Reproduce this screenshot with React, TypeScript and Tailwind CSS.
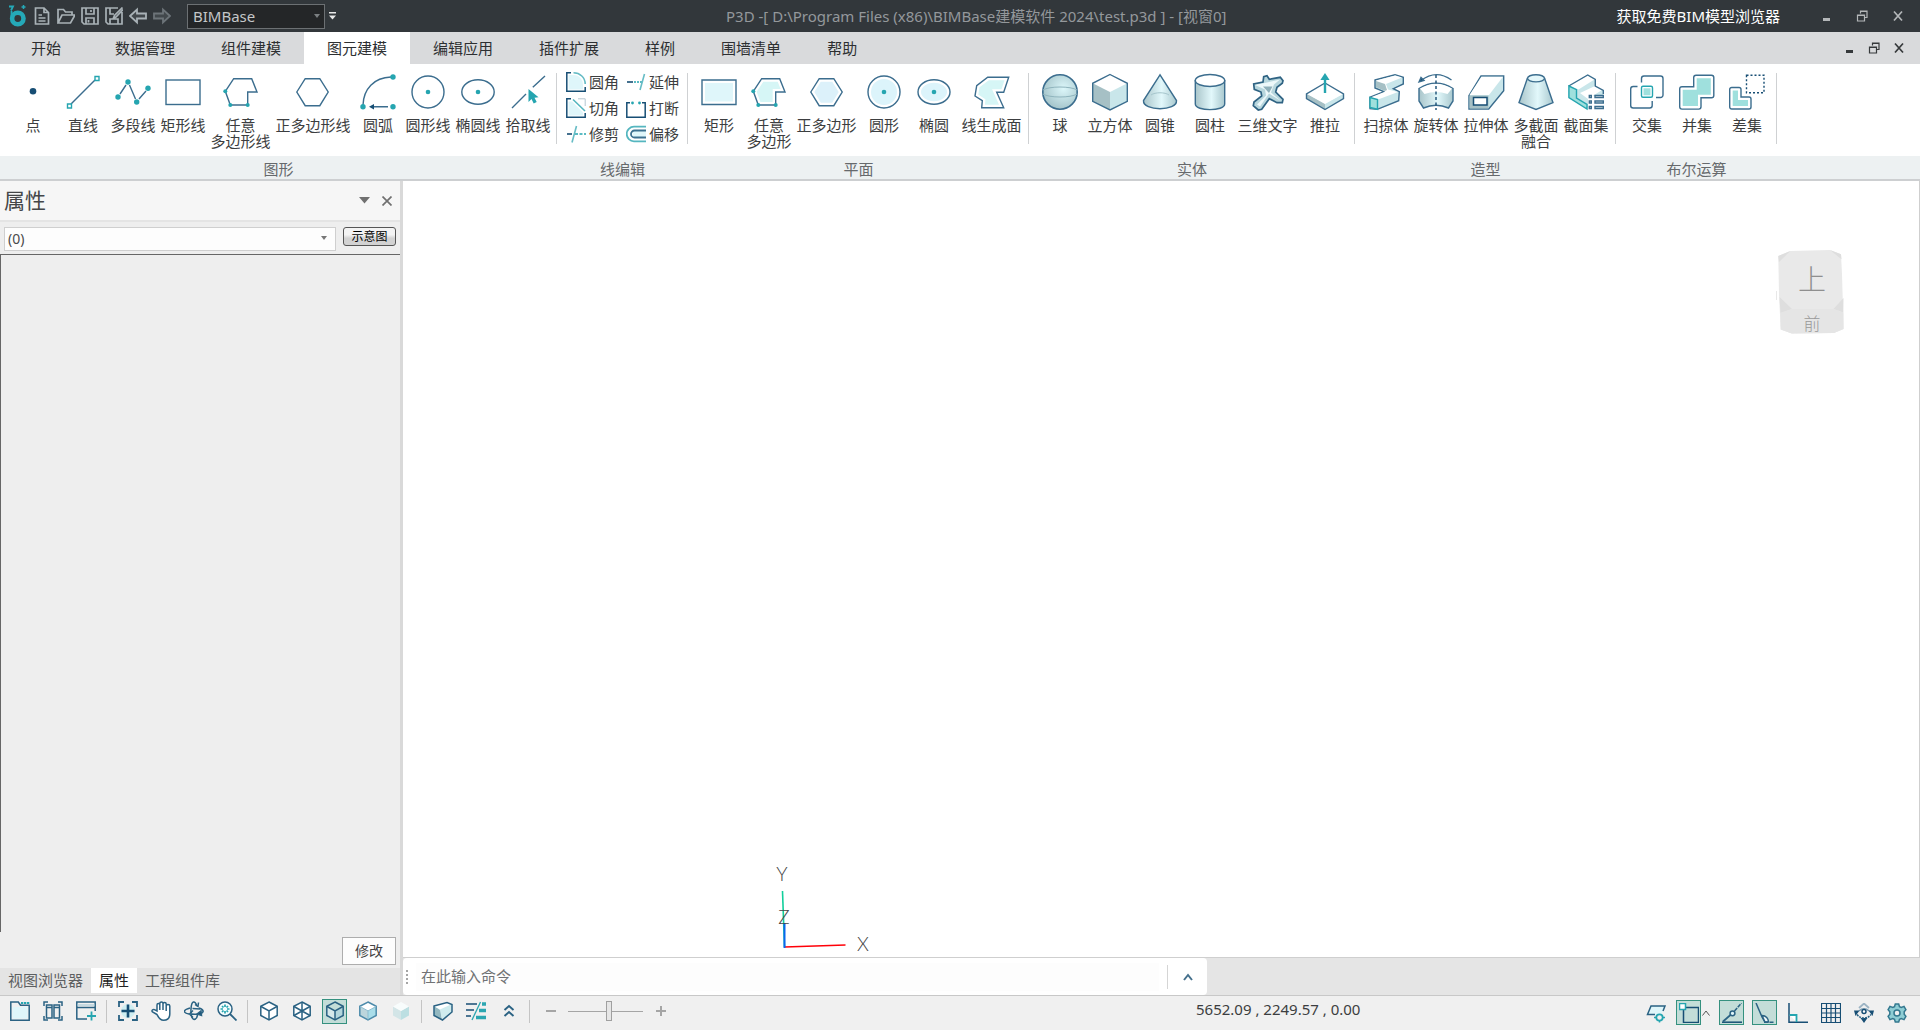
import { useState } from 'react';
import type { ReactNode } from 'react';

const NAVY = '#174e74';
const LINE = '#3b6d8e';
const TEAL = '#25a5b0';
const PALE = '#dff6fa';
const MINT = '#9fe0dd';

const menuTabs = ['开始', '数据管理', '组件建模', '图元建模', '编辑应用', '插件扩展', '样例', '围墙清单', '帮助'];

const FREE_POLY = 'M2.3 17.3 10.7 4.7h18L34 18h-9.3v13H7.3Z';
const HEXAGON = 'M1.8 18 10.2 4.7h14.6L33.2 18l-8.4 13.7H10.2Z';
const FACE = 'M13.7 3.3h21l-5 15h-7l7 15.4h-22l.6-7L1 22l1.7-10.3Z';

const Face = ({ d, fill = PALE }: { d: string; fill?: string }) => (
  <>
    <path d={d} fill={fill} stroke="#fff" strokeWidth="6" />
    <path d={d} />
  </>
);

const Dot = ({ x, y, r = 2.3, fill = TEAL }: { x: number; y: number; r?: number; fill?: string }) => (
  <circle cx={x} cy={y} r={r} fill={fill} stroke="none" />
);

const PolyDots = () => (
  <>
    <Dot x={2.3} y={17.3} r={2} />
    <Dot x={7.3} y={31} r={2} />
    <Dot x={24.7} y={31} r={2} />
  </>
);

const bigIcons: Record<string, ReactNode> = {
  point: <Dot x={18} y={17.3} r={3.3} fill={NAVY} />,
  line: (
    <>
      <path d="M6 30 30 6" />
      <path d="M2.5 30h4v4h-4zM30 2.5h4v4h-4z" fill="#fff" stroke={TEAL} />
    </>
  ),
  polyline: (
    <>
      <path d="M5 20 11 11M14.500 11l6 14M24 25l7-8" />
      <Dot x={3} y={23} r={2.7} />
      <Dot x={13} y={8} r={2.7} />
      <Dot x={21.7} y={28} r={2.7} />
      <Dot x={33} y={14.3} r={2.7} />
    </>
  ),
  rectLine: <rect x="1" y="6" width="34" height="24.5" />,
  polyLine: (
    <>
      <path d={FREE_POLY} />
      <PolyDots />
    </>
  ),
  hexLine: <path d={HEXAGON} />,
  arc: (
    <>
      <path d="M3 31C3.500 15 14 3.500 31 3M12 32.700h16" />
      <path d="m9 32.700 5-2.700v5.400z" fill={NAVY} stroke="none" />
      <Dot x={3} y={32.7} r={2.7} />
      <Dot x={33} y={3} r={2.7} />
      <Dot x={33} y={32.7} r={2.7} />
    </>
  ),
  circleLine: (
    <>
      <circle cx="18" cy="18" r="16" />
      <Dot x={18} y={18} />
    </>
  ),
  ellipseLine: (
    <>
      <ellipse cx="18" cy="18" rx="16.200" ry="12.200" />
      <Dot x={18} y={18} />
    </>
  ),
  pick: (
    <>
      <path d="M2 34 16 20M22.800 13.300 35 2" />
      <path d="M18.500 15v13l3-3 2.200 4.500 3-1.500-2.200-4.300 4-.5z" fill={TEAL} stroke="none" />
    </>
  ),
  rect: <Face d="M1 6h34v24.500H1z" />,
  poly: (
    <>
      <Face d={FREE_POLY} fill="#d6f6f6" />
      <PolyDots />
    </>
  ),
  hex: <Face d={HEXAGON} fill="#dcf1fa" />,
  circle: (
    <>
      <Face d="M2 18a16 16 0 1 0 32 0 16 16 0 1 0-32 0Z" fill="#dcf4fb" />
      <Dot x={18} y={18} />
    </>
  ),
  ellipse: (
    <>
      <Face d="M2 18a16 12.200 0 1 0 32 0 16 12.200 0 1 0-32 0Z" fill="#dcf4fb" />
      <Dot x={18} y={18} />
    </>
  ),
  lineFace: <Face d={FACE} fill="#d6f6f6" />,
  sphere: (
    <>
      <circle cx="18" cy="18" r="17.200" fill="url(#ball)" strokeWidth="1.600" />
      <path d="M1 16c6-4 28-4 34 0M1 20c6 4 28 4 34 0" stroke="#8fb4bd" strokeWidth="1" />
    </>
  ),
  cube: (
    <>
      <path d="M18 .5 35.300 9.300 18 18 .7 9.300Z" fill="#fff" stroke="none" />
      <path d="M.7 9.300 18 18v18L.7 27.300Z" fill="#a6c0c5" stroke="none" />
      <path d="M35.300 9.300 18 18v18l17.300-8.700Z" fill="#c9e6ea" stroke="none" />
      <path d="M18 .5 35.300 9.300v18L18 36 .7 27.300v-18Z" />
    </>
  ),
  cone: (
    <>
      <path d="M18 .8 1.500 26.500c-1 11 34 11 33 0Z" fill="url(#metal)" />
      <path d="M9 21c4-3 14-3 18 0" stroke="#a5c5cc" strokeWidth="1" />
    </>
  ),
  cylinder: (
    <>
      <path d="M3.300 6v24c0 7.500 29.400 7.500 29.400 0V6" fill="url(#metal)" />
      <ellipse cx="18" cy="6.500" rx="14.700" ry="6" fill="#fff" />
    </>
  ),
  text3d: (
    <>
      <path
        d="m17 1.700 2.300 3.600 11-2L33 6.700l-.7 2.600-5.300 4-1.300 4.700 7.300 7.300-.7 3.400H27l-7.700-4-7.600 10.600-3.400.7-5-4.300.7-3.700 7.700-6-.7-4-6.700-2.700-.6-5.300 9.300-2 .7-5.300Z"
        fill="#b7d6dd"
        strokeWidth="1.700"
        stroke="#2f6383"
      />
      <path d="m5 11 12-2.500 13-3-6 5-3 8 10 8.500-12-7.500-9 13-3-2 9-9-1-6Z" fill="#edf8fa" stroke="none" />
      <path d="M13 12.500h9.500L19 19Z" fill="#8fb0ba" stroke="none" />
    </>
  ),
  pushPull: (
    <>
      <path d="m0 20 18 10v5.700L0 24.500Z" fill="#a6c0c5" stroke="none" />
      <path d="M36 20 18 30v5.700l18-11.200Z" fill="#c9e6ea" stroke="none" />
      <path d="M18 9 35.500 20 18 29.500.5 20Z" fill="#fff" stroke="none" />
      <path d="M18 9 36.500 20v4.500L18 35.500-.5 24.500V20Z" />
      <path d="M18 19V4" stroke={TEAL} strokeWidth="2.400" />
      <path d="m18-1 4.600 7h-9.200Z" fill={TEAL} stroke="none" />
    </>
  ),
  sweep: (
    <>
      <path d="m7 6 20-5.300 8.300 2.600V10l-10 4.700 6 3-.6 9L9.300 35.300 2 34.700V23.300l14-5.600L7 14Z" fill="#c9e6ea" />
      <path d="m8 6.500 19-5 7 2-16 6.500 2 5.500 10 2.500-20 7.500-7-2.200 14-5.600Z" fill="#fff" stroke="none" />
      <path d="m8 7 9 3 2 6-2 1-9-4Z" fill="#a6c0c5" stroke="none" />
      <path d="m2 23.500 7.500 2v9.800L2 33.500Z" fill={MINT} stroke={TEAL} />
    </>
  ),
  revolve: (
    <>
      <path d="M1 14.500Q18 4 35 14.500V27l-4.500 7Q18 28.500 5.500 34L1 27Z" fill="url(#metal)" />
      <path d="M2 14.500Q18 5 34 14.500l-4.500 5.500Q18 16 6.500 20Z" fill="#fff" stroke="none" />
      <path d="M3 6.500Q18-5 33.500 6" />
      <path d="m1 8 2-4.500 3 3Z" fill={NAVY} />
      <path d="M18 1v35" stroke={NAVY} strokeDasharray="3 2.500" />
    </>
  ),
  extrude: (
    <>
      <path d="M1 21.500 13 2h22.700v14.700L20.700 35H1Z" fill="#c9e6ea" />
      <path d="M1.500 21 13.500 2.700h21.500L21 21Z" fill="#fff" stroke="none" />
      <path d="M1.500 21.500h19v13h-19z" fill="#a6c0c5" stroke="none" />
      <path d="M5.500 23.500h13.500v7.500H5.500z" fill="#fff" stroke={NAVY} strokeWidth="1.500" />
    </>
  ),
  loft: (
    <>
      <path d="M9.500 4 1 28.700l17 6.800 17-6.800L26.500 4" fill="url(#metal)" />
      <ellipse cx="18" cy="4.300" rx="8.500" ry="3.600" fill="#e4f7fa" />
    </>
  ),
  sectionSet: (
    <>
      <path d="M.7 12 19.700 1l7.600 4.300V12l8 4.300V22H20v13L.7 23Z" fill="#c9e6ea" stroke="none" />
      <path d="m1.500 12 18-10.500 7 4-16 10Z" fill="#fff" stroke="none" />
      <path d="m12 19 15-7 7 4-14 9Z" fill="#fff" stroke="none" />
      <path d="M.7 12 19.700 1l7.600 4.300V12l8 4.300V20" />
      <path d="m.9 12 7.600 3.700V24L19 30.500V35L.9 23.500Z" fill={MINT} stroke={TEAL} />
      <path d="M21.300 21.500h2v2h-2zM21.300 27h2v2h-2zM21.300 32.500h2v2h-2zM27 21.500h8.300v2H27zM27 27h8.300v2H27zM27 32.500h8.300v2H27z" fill="#fff" />
    </>
  ),
  intersect: (
    <>
      <path d="M12.500 8.500V4.500a2.500 2.500 0 0 1 2.500-2.500h16.500A2.500 2.500 0 0 1 34 4.500V21a2.500 2.500 0 0 1-2.500 2.500H27M8.500 12.500H4.200A2.500 2.500 0 0 0 1.700 15v16.500A2.500 2.500 0 0 0 4.200 34h16.500a2.500 2.500 0 0 0 2.500-2.500V27" />
      <rect x="12.500" y="12.300" width="11" height="11" rx="1.500" fill="#fff" stroke={TEAL} />
      <rect x="14.500" y="14.300" width="7" height="7" fill={MINT} stroke="none" />
    </>
  ),
  union: (
    <>
      <path d="M17 1.200h15.500A2.300 2.300 0 0 1 34.800 3.500v18a2.300 2.300 0 0 1-2.300 2.300H22v9a2.300 2.300 0 0 1-2.300 2.300H3A2.300 2.300 0 0 1 .7 32.800V15A2.300 2.300 0 0 1 3 12.700h11.700V3.500A2.300 2.300 0 0 1 17 1.200Z" fill={MINT} stroke="#fff" strokeWidth="6" />
      <path d="M17 1.200h15.500A2.300 2.300 0 0 1 34.800 3.500v18a2.300 2.300 0 0 1-2.300 2.300H22v9a2.300 2.300 0 0 1-2.300 2.300H3A2.300 2.300 0 0 1 .7 32.800V15A2.300 2.300 0 0 1 3 12.700h11.700V3.500A2.300 2.300 0 0 1 17 1.200Z" />
    </>
  ),
  subtract: (
    <>
      <path d="M2.700 13.500H10a2 2 0 0 1 2 2V23h8a2 2 0 0 1 2 2v8a2 2 0 0 1-2 2H2.700a2 2 0 0 1-2-2V15.500a2 2 0 0 1 2-2Z" fill={MINT} stroke="#fff" strokeWidth="6" />
      <path d="M2.700 13.500H10a2 2 0 0 1 2 2V23h8a2 2 0 0 1 2 2v8a2 2 0 0 1-2 2H2.700a2 2 0 0 1-2-2V15.500a2 2 0 0 1 2-2Z" />
      <rect x="17.500" y="1.200" width="17.500" height="17.500" stroke={NAVY} strokeDasharray="2 2" />
    </>
  ),
};

const smallIcons: Record<string, ReactNode> = {
  fillet: (
    <>
      <path d="M2.500 3h5c6 0 9.500 5 9.500 10v4.500H2.500z" fill={PALE} stroke="none" />
      <path d="M5 .8H.8v18.400h18.400V15" stroke={NAVY} strokeWidth="1.500" />
      <path d="M7.500.8C14 .8 19.200 5.500 19.200 12" stroke="#66bcc5" strokeWidth="1.600" />
    </>
  ),
  chamfer: (
    <>
      <path d="M2.500 3.500h3.500l11 11v3H2.500z" fill={PALE} stroke="none" />
      <path d="M5 .8H.8v18.400h18.400V15" stroke={NAVY} strokeWidth="1.500" />
      <path d="m7 1.500 12 11.500" stroke="#55b6bf" strokeWidth="1.600" />
      <path d="M12 .8h7.200V8" stroke="#b5c7d1" />
    </>
  ),
  trim: (
    <>
      <path d="M1 10h5" stroke={NAVY} strokeWidth="1.600" />
      <path d="M9 10h11" stroke={TEAL} strokeWidth="1.600" strokeDasharray="3 1.500" />
      <path d="M10.500 2 6 18.500" stroke="#66bcc5" strokeWidth="1.600" />
    </>
  ),
  extend: (
    <>
      <path d="M1 10h6" stroke={NAVY} strokeWidth="1.600" />
      <path d="M8 10h8" stroke={TEAL} strokeWidth="1.600" strokeDasharray="2 1" />
      <path d="M18.500 2 14 18" stroke="#66bcc5" strokeWidth="1.600" />
    </>
  ),
  breakLine: (
    <>
      <path d="M4 4.800H.8v14.400h18.400V4.800H16" stroke={NAVY} strokeWidth="1.500" />
      <circle cx="6.500" cy="5" r="1.400" fill={TEAL} stroke="none" />
      <circle cx="13.500" cy="5" r="1.400" fill={TEAL} stroke="none" />
    </>
  ),
  offset: (
    <>
      <path d="M20 6H9a4.500 4.500 0 0 0 0 8h11z" fill={PALE} stroke="none" />
      <path d="M20 2.700H8a7 7 0 0 0 0 14.600h12" stroke="#55b6bf" strokeWidth="1.800" />
      <path d="M20 6.500H8.500a3.500 3.500 0 0 0 0 7H20" stroke="#3c7190" strokeWidth="1.800" />
    </>
  ),
};

interface Tool {
  label: string;
  icon: string;
  width?: string;
}

const shapeTools: Tool[] = [
  { label: '点', icon: 'point' },
  { label: '直线', icon: 'line' },
  { label: '多段线', icon: 'polyline' },
  { label: '矩形线', icon: 'rectLine' },
  { label: '任意\n多边形线', icon: 'polyLine', width: 'w-[65px]' },
  { label: '正多边形线', icon: 'hexLine', width: 'w-20' },
  { label: '圆弧', icon: 'arc' },
  { label: '圆形线', icon: 'circleLine' },
  { label: '椭圆线', icon: 'ellipseLine' },
  { label: '拾取线', icon: 'pick' },
];

const editTools: Tool[] = [
  { label: '圆角', icon: 'fillet' },
  { label: '延伸', icon: 'extend' },
  { label: '切角', icon: 'chamfer' },
  { label: '打断', icon: 'breakLine' },
  { label: '修剪', icon: 'trim' },
  { label: '偏移', icon: 'offset' },
];

const planeTools: Tool[] = [
  { label: '矩形', icon: 'rect' },
  { label: '任意\n多边形', icon: 'poly' },
  { label: '正多边形', icon: 'hex', width: 'w-[65px]' },
  { label: '圆形', icon: 'circle' },
  { label: '椭圆', icon: 'ellipse' },
  { label: '线生成面', icon: 'lineFace', width: 'w-[65px]' },
];

const solidTools: Tool[] = [
  { label: '球', icon: 'sphere' },
  { label: '立方体', icon: 'cube' },
  { label: '圆锥', icon: 'cone' },
  { label: '圆柱', icon: 'cylinder' },
  { label: '三维文字', icon: 'text3d', width: 'w-[65px]' },
  { label: '推拉', icon: 'pushPull' },
];

const modelTools: Tool[] = [
  { label: '扫掠体', icon: 'sweep' },
  { label: '旋转体', icon: 'revolve' },
  { label: '拉伸体', icon: 'extrude' },
  { label: '多截面\n融合', icon: 'loft' },
  { label: '截面集', icon: 'sectionSet' },
];

const booleanTools: Tool[] = [
  { label: '交集', icon: 'intersect' },
  { label: '并集', icon: 'union' },
  { label: '差集', icon: 'subtract' },
];

const BigTool = ({ tool }: { tool: Tool }) => (
  <button type="button" className={`flex flex-col items-center gap-[7px] pt-[10px] ${tool.width ?? 'w-[50px]'}`}>
    <svg width="36" height="36" viewBox="0 0 36 36" fill="none" stroke={LINE} strokeWidth="1.400" className="overflow-visible">
      {bigIcons[tool.icon]}
    </svg>
    <span className="whitespace-pre text-center text-[15px] leading-4">{tool.label}</span>
  </button>
);

const RibbonGroup = ({ title, pad = 'pl-1.5 pr-[5px]', children }: { title: string; pad?: string; children: ReactNode }) => (
  <section className="flex shrink-0 flex-col">
    <div className={`relative flex h-[92px] items-start ${pad} after:absolute after:right-0 after:top-[9px] after:h-[71px] after:w-px after:bg-[#cfd1d3]`}>
      {children}
    </div>
    <h2 className="h-[23px] bg-[#edf1f2] pt-0.5 text-center text-[15px] leading-[22px] text-[#66696c]">{title}</h2>
  </section>
);

const WindowButtons = ({ className }: { className: string }) => (
  <div className={`flex items-center ${className}`}>
    <button type="button" aria-label="最小化">
      <svg width="12" height="12" viewBox="0 0 12 12"><path d="M3 8h7v3H3z" fill="currentColor" /></svg>
    </button>
    <button type="button" aria-label="还原">
      <svg width="12" height="12" viewBox="0 0 12 12" fill="none" stroke="currentColor">
        <path d="M4.500 3.500V1H11v6.500H9M4.500 1.500H11M1.500 5h7v6h-7zM1.500 5.500h7" strokeWidth="1.200" />
      </svg>
    </button>
    <button type="button" aria-label="关闭">
      <svg width="12" height="12" viewBox="0 0 12 12" fill="none" stroke="currentColor" strokeWidth="1.700"><path d="m2 1.500 8 9M10 1.500l-8 9" /></svg>
    </button>
  </div>
);

const quickIcons: { label: string; dim?: boolean; art: ReactNode }[] = [
  { label: '新建', art: <path d="M2.500 1h8.500l4.500 4.500V17h-13zM11 1v4.500h4.500M5.500 8H9M5.500 11h7M5.500 14h7" /> },
  { label: '打开', art: <path d="M1 16V2.500h5.500l2 2.500H15v3M1 16 5 8h13l-4.500 8z" /> },
  { label: '保存', art: <path d="M1 1h16v16H3l-2-2zM5 1v6h8V1M5 17v-6h8v6M7.500 13v2.500M10 3v2" /> },
  { label: '另存为', art: <path d="M13 1H1v14l2 2h14V5M5 1v6h4M5 17v-5h8v5M17.500.5l-8 8-1 2.500 2.500-1 7-7.500" /> },
  { label: '撤销', art: <path d="M1 9 8 2.500v4h9v5H8v4z" fill="#42484c" strokeWidth="1.800" /> },
  { label: '重做', dim: true, art: <path d="m17 9-7-6.500v4H1v5h9v4z" fill="#42484c" strokeWidth="1.800" /> },
];

const TitleBar = () => (
  <header className="flex h-8 shrink-0 items-center bg-[#32373b] text-[15px]">
    <svg width="20" height="22" viewBox="0 0 20 22" className="ml-2" fill="none">
      <circle cx="9.800" cy="13.500" r="5.700" stroke="#25a9b8" strokeWidth="4.600" />
      <path d="M1 1.500h4l-2 4M3.500 6v7" stroke="#25a9b8" strokeWidth="1.800" />
      <path d="M15.500 0v4M13.500 2h4" stroke="#25a9b8" strokeWidth="1.500" />
    </svg>
    <div className="ml-[5px] flex gap-1.5">
      {quickIcons.map((q) => (
        <button key={q.label} type="button" aria-label={q.label} className={q.dim ? 'text-[#6d7479]' : 'text-[#a9b2b7]'}>
          <svg width="18" height="18" viewBox="0 0 18 18" fill="none" stroke="currentColor" strokeWidth="1.700">{q.art}</svg>
        </button>
      ))}
    </div>
    <div className="relative ml-4">
      <select aria-label="工作空间" className="h-[25px] w-[138px] appearance-none border border-[#6c7073] bg-[#242628] pl-[5px] text-[15px] leading-[22px] text-[#c5c7c9]">
        <option>BIMBase</option>
      </select>
      <svg width="6" height="4" viewBox="0 0 6 4" className="pointer-events-none absolute right-[5px] top-[10px]"><path d="M0 0h6L3 4z" fill="#7b7f82" /></svg>
    </div>
    <button type="button" aria-label="自定义快速访问工具栏" className="ml-1">
      <svg width="7" height="8" viewBox="0 0 7 8" fill="#e8e8e8"><path d="M0 0h7v1.500H0zM0 3.500h7L3.500 7.500z" /></svg>
    </button>
    <h1 className="flex-1 whitespace-nowrap text-center text-[#94989b]">
      P3D -[ D:\Program Files (x86)\BIMBase建模软件 2024\test.p3d ] - [视窗0]
    </h1>
    <a href="#viewer" className="mr-10 whitespace-nowrap text-white">获取免费BIM模型浏览器</a>
    <WindowButtons className="mr-4 gap-6 text-[#b4b7b9]" />
  </header>
);

const MenuBar = () => {
  const [active, setActive] = useState('图元建模');
  return (
    <nav className="flex h-8 shrink-0 bg-[#d9dadc] text-[15px] text-[#2d2f31]">
      {menuTabs.map((tab) => (
        <button
          key={tab}
          type="button"
          onClick={() => setActive(tab)}
          className={`${tab === '开始' ? 'px-[31px]' : 'px-[23px]'} ${tab === active ? 'bg-white' : ''}`}
        >
          {tab}
        </button>
      ))}
      <WindowButtons className="ml-auto mr-[15px] gap-[13px] text-[#36393b]" />
    </nav>
  );
};

const Ribbon = () => (
  <div className="flex shrink-0 border-b-2 border-[#cdcfd1] bg-white text-[#3c3e40]">
    <RibbonGroup title="图形" pad="pl-2 pr-1">
      {shapeTools.map((t) => <BigTool key={t.icon} tool={t} />)}
    </RibbonGroup>
    <RibbonGroup title="线编辑" pad="pl-[9px] pr-[9px]">
      <div className="grid grid-cols-2 gap-x-[7px] pt-[5px]">
        {editTools.map((t) => (
          <button key={t.icon} type="button" className="flex h-[26px] items-center gap-[3px]">
            <svg width="20" height="20" viewBox="0 0 20 20" fill="none">{smallIcons[t.icon]}</svg>
            <span className="text-[15px] leading-5">{t.label}</span>
          </button>
        ))}
      </div>
    </RibbonGroup>
    <RibbonGroup title="平面">
      {planeTools.map((t) => <BigTool key={t.icon} tool={t} />)}
    </RibbonGroup>
    <RibbonGroup title="实体">
      {solidTools.map((t) => <BigTool key={t.icon} tool={t} />)}
    </RibbonGroup>
    <RibbonGroup title="造型">
      {modelTools.map((t) => <BigTool key={t.icon} tool={t} />)}
    </RibbonGroup>
    <RibbonGroup title="布尔运算">
      {booleanTools.map((t) => <BigTool key={t.icon} tool={t} />)}
    </RibbonGroup>
    <div className="flex flex-1 flex-col justify-end">
      <div className="h-[23px] bg-[#edf1f2]" />
    </div>
  </div>
);

const PropertyPanel = () => (
  <aside className="flex w-[403px] shrink-0 flex-col border-r-[3px] border-[#d9d9d9] bg-[#eeeeee]">
    <div className="flex h-[41px] items-center border-b-2 border-[#e4e4e4] bg-[#f6f6f6] pl-1 pr-2 text-[#707070]">
      <h2 className="flex-1 pb-0.5 text-[21px] leading-7 text-[#444648]">属性</h2>
      <button type="button" aria-label="面板菜单" className="mr-3">
        <svg width="11" height="7" viewBox="0 0 11 7"><path d="M0 0h11L5.500 6.500z" fill="currentColor" /></svg>
      </button>
      <button type="button" aria-label="关闭面板">
        <svg width="10" height="10" viewBox="0 0 10 10" fill="none" stroke="currentColor" strokeWidth="1.700"><path d="m.5.5 9 9M9.500.5l-9 9" /></svg>
      </button>
    </div>
    <div className="flex h-8 items-start gap-[7px] px-1 pt-1">
      <div className="relative flex-1">
        <select aria-label="选中对象" className="h-6 w-full appearance-none border border-[#cfcfcf] bg-[#fdfdfd] pl-[3px] text-sm text-[#4a4a4a]">
          <option>(0)</option>
        </select>
        <svg width="6" height="4" viewBox="0 0 6 4" className="pointer-events-none absolute right-[9px] top-[10px]"><path d="M0 0h6L3 4z" fill="#777" /></svg>
      </div>
      <button type="button" className="mt-px h-[19px] w-[53px] rounded-[3px] border border-[#555] bg-linear-to-b from-[#f3f3f3] from-40% to-[#d2d2d2] to-60% text-xs leading-4 text-black">
        示意图
      </button>
    </div>
    <div className="flex-1 border-l border-t border-[#666]" />
    <div className="flex justify-end p-1 pt-[5px] pb-[3px]">
      <button type="button" className="h-7 w-[54px] border border-[#adadad] bg-[#fdfdfd] text-sm text-[#444]">修改</button>
    </div>
    <div className="flex h-[27px] items-start bg-[#e4e4e4] text-[15px] text-[#5d5f61]">
      <button type="button" className="h-[25px] px-2 leading-[25px]">视图浏览器</button>
      <button type="button" className="h-[25px] bg-white px-2 leading-[25px] text-[#222]">属性</button>
      <button type="button" className="h-[25px] px-2 leading-[25px]">工程组件库</button>
    </div>
  </aside>
);

const ViewCube = () => (
  <svg width="76" height="95" viewBox="0 0 76 95" className="absolute right-[69px] top-16 font-[family-name:'Noto_Sans_CJK_SC',sans-serif]">
    <path d="m4.300 11 12-5L56 5l11 4.300 1 20 1.600 54.700L60 88l-42.300.6-11-4L5 50Z" fill="#e9e9e9" />
    <path d="m4.300 11 12-5L5 17ZM56 5l11 4.300.5 5ZM5.500 52 18 64 6.500 68ZM69.500 53l-.2 14.500L59.500 64Z" fill="#dedede" />
    <path d="M18 64h41.500l10 3.500v16.500L60 88l-42.300.6-11-4L6.500 68Z" fill="#e5e5e5" />
    <path d="M2.500 46v9" stroke="#e8e8e8" />
    <text x="38" y="45" textAnchor="middle" fontSize="28" fontWeight="300" fill="#8f8f8f">上</text>
    <text x="38" y="85" textAnchor="middle" fontSize="17" fontWeight="300" fill="#999">前</text>
  </svg>
);

const AxisTriad = () => (
  <svg width="120" height="100" viewBox="0 0 120 100" className="absolute bottom-0 left-[360px] font-[family-name:Lato,sans-serif]" fill="none">
    <path d="m21.500 90-2-56" stroke="#12cf9c" strokeWidth="1.600" />
    <path d="m21.500 90 61-2" stroke="#ff0008" strokeWidth="1.700" />
    <path d="M21.500 91V66" stroke="#0a66ee" strokeWidth="2" />
    <g fontSize="19" fontWeight="300" fill="#444" textAnchor="middle">
      <text x="19" y="24">Y</text>
      <text x="21" y="67">Z</text>
      <text x="100" y="94">X</text>
    </g>
  </svg>
);

const Workspace = () => (
  <main className="flex flex-1 flex-col bg-[#e5e5e5]">
    <div className="relative flex-1 border-b border-r border-[#cfcfcf] bg-white">
      <ViewCube />
      <AxisTriad />
    </div>
    <div className="flex h-[37px] w-[804px] items-center rounded-[4px] bg-white">
      <svg width="2" height="14" viewBox="0 0 2 14" fill="#a5a5a5" className="ml-[3px]">
        <path d="M0 0h2v2H0zM0 4h2v2H0zM0 8h2v2H0zM0 12h2v2H0z" />
      </svg>
      <input
        type="text"
        aria-label="命令"
        placeholder="在此输入命令"
        className="ml-2 mr-2 h-7 flex-1 bg-[#fdfdfd] pb-0.5 pl-[5px] text-[15px] outline-none placeholder:text-[#707274]"
      />
      <button type="button" aria-label="展开命令历史" className="flex h-6 w-10 items-center justify-center border-l border-[#d5d5d5]">
        <svg width="10" height="8" viewBox="0 0 10 8" fill="none" stroke="#44708c" strokeWidth="2"><path d="M1 7 5 2l4 5" /></svg>
      </button>
    </div>
  </main>
);

const CUBE = 'M10 1 18.200 5.300v9.200L10 19 1.800 14.500V5.300Z';

const statusIcons: Record<string, ReactNode> = {
  newView: (
    <>
      <path d="M2.500 6h15v11.500h-15z" fill={PALE} stroke="none" />
      <path d="M.8 1h7.500l2.200 3.200h8.700v15H.8z" />
      <path d="M11 2h8.500" stroke={TEAL} strokeWidth="2" strokeDasharray="2.300 .7" />
    </>
  ),
  tile: <path d="M5 1H1v4M15 1h4v4M5 19H1v-4M15 19h4v-4M3.500 4h5.500v13H3.500zM11 4h5.500v13H11zM3.500 6.500H9M11 6.500h5.500" />,
  addWindow: (
    <>
      <path d="M11 18H.8V1h18.400v9M1 6.500h18" />
      <path d="M1 4h18" stroke="#9cc3d2" strokeWidth="1" />
      <path d="M15.500 10.500v9M11 15h9" stroke={TEAL} strokeWidth="1.800" />
    </>
  ),
  fit: (
    <>
      <circle cx="10" cy="10" r="7" fill="#cfeef2" stroke="none" />
      <path d="M6 1H1v5M14 1h5v5M6 19H1v-5M14 19h5v-5" strokeWidth="1.800" />
      <path d="M10 3.500v13M3.500 10h13" stroke={NAVY} strokeWidth="2.600" />
    </>
  ),
  pan: <path d="M6 13.500 1.500 11c-1.500-1.500.5-3 2-2.300L6 10V4c0-1.900 2.800-1.900 2.800 0v5V2.500c0-1.900 3.200-1.900 3.200 0V9 3c0-1.900 3.200-1.900 3.200 0v7-5c0-1.900 3.600-1.900 3.600 0v8c0 4-2 6.200-6.300 6.200-4 0-5-2.700-6.500-5.700Z" fill="#fff" />,
  orbit: (
    <>
      <path d="M13 5C11-1 7.500-.5 7 8s2 11.500 4.500 10c1.500-1 2-3 2-5M6 7C-1.500 9-1 12 5 13M15 7c6 2 5 5 0 6-2 .5-4 .5-7 0" />
      <path d="m9 9.500-3.500 3.500L9 16.500M11 3.500l3 2 .5-4M8.500 7.500 16 8" />
      <path d="m13 13 4-3 .5 4.500z" fill={NAVY} />
    </>
  ),
  zoom: (
    <>
      <circle cx="8" cy="8" r="7" fill="#f4fcfd" />
      <path d="m13 13 6.500 6.500" strokeWidth="1.800" />
      <path d="M8 3.500v2.500M8 10v2.500M3.500 8H6M10 8h2.500M5 5l1.500 1.500M11 5 9.500 6.500M5 11l1.500-1.500M11 11 9.500 9.500" stroke={TEAL} strokeWidth="1.700" />
    </>
  ),
  cubeLine: (
    <>
      <path d={CUBE} fill="#fff" />
      <path d="m2 5.500 8 4.400 8-4.400M10 9.900v8.600" />
    </>
  ),
  cubeWire: (
    <>
      <path d={CUBE} fill="#fff" />
      <path d="m2 5.500 16 9M18 5.500l-16 9M10 1v18" />
    </>
  ),
  cubeHidden: (
    <>
      <path d="m2 5.500 8 4.400v9l-8-4.400Z" fill="#d5e8ea" stroke="none" />
      <path d="m18 5.500-8 4.400v9l8-4.400Z" fill="#b3d6dc" stroke="none" />
      <path d={CUBE} />
      <path d="m2 5.500 8 4.400 8-4.400M10 9.900v8.600" />
    </>
  ),
  cubeShade: (
    <>
      <path d="m2 5.500 8 4.400v9l-8-4.400Z" fill="#bcd5dc" stroke="none" />
      <path d="m18 5.500-8 4.400v9l8-4.400Z" fill="#a9dde9" stroke="none" />
      <path d="M10 1 18 5.500l-8 4.400-8-4.400Z" fill="#fff" stroke="none" />
      <path d={CUBE} stroke="#4d8bab" />
      <path d="m2 5.500 8 4.400 8-4.400M10 9.900v8.600" stroke="#8dbdd0" strokeWidth="1" />
    </>
  ),
  cubeSolid: (
    <>
      <path d="m2 5.500 8 4.400v9l-8-4.400Z" fill="#d3e5e7" stroke="none" />
      <path d="m18 5.500-8 4.400v9l8-4.400Z" fill="#bcdfe2" stroke="none" />
      <path d="M10 1 18 5.500l-8 4.400-8-4.400Z" fill="#f8fcfc" stroke="none" />
    </>
  ),
  section: (
    <>
      <path d="m1 5 6.500 3.500L9 19l-8-4.500Z" fill="#93b8c0" stroke="none" />
      <path d="M1 5 14 1.500 19 3l-1 9-9 7-2-10Z" fill="#cfecee" stroke="none" />
      <path d="M1 5 14 1.500 19 3 7 8.500Z" fill="#fff" stroke="none" />
      <path d="M1 5 14 1.500 19 3.500V11l-9.500 8L1 14.500Z" />
    </>
  ),
  layers: (
    <>
      <path d="M0 3h11M0 9h8M0 15h5" stroke={NAVY} strokeWidth="1.700" />
      <path d="M16 3h4M13 9.500h7M10 16.500h10" stroke="#2ba6b1" strokeWidth="3.500" />
      <path d="M14.500 1 6 19" stroke="#2ba6b1" strokeWidth="1.300" />
    </>
  ),
  more: <path d="m5.500 9 4.500-4 4.500 4M5.500 15l4.500-4 4.500 4" strokeWidth="1.900" />,
};

const StatusButton = ({ label, active, children }: { label: string; active?: boolean; children: ReactNode }) => (
  <button
    type="button"
    aria-label={label}
    className={`flex size-[25px] shrink-0 items-center justify-center ${active ? 'border border-[#35917f] bg-[#c3ddd8]' : ''}`}
  >
    <svg width="20" height="20" viewBox="0 0 20 20" fill="none" stroke="#2a6283" strokeWidth="1.500" className="shrink-0">{children}</svg>
  </button>
);

const Divider = () => <span className="h-[23px] w-px bg-[#c4c4c4]" />;

const viewButtons: [string, string][][] = [
  [['newView', '新建视图'], ['tile', '平铺窗口'], ['addWindow', '添加窗口']],
  [['fit', '全图'], ['pan', '平移'], ['orbit', '旋转'], ['zoom', '缩放']],
  [['cubeLine', '线框'], ['cubeWire', '透明线框'], ['cubeHidden', '消隐'], ['cubeShade', '着色带边'], ['cubeSolid', '着色']],
  [['section', '剖切'], ['layers', '图层'], ['more', '更多']],
];

const StatusBar = () => (
  <footer className="flex h-[35px] shrink-0 items-center border-t border-[#c8c8c8] bg-[#f0f0f0]">
    <div className="flex flex-1 items-center gap-2 pb-1 pl-[7px]">
      {viewButtons.map((group, i) => (
        <div key={i} className="flex items-center gap-2">
          {group.map(([icon, label]) => (
            <StatusButton key={icon} label={label} active={icon === 'cubeHidden'}>{statusIcons[icon]}</StatusButton>
          ))}
          <Divider />
        </div>
      ))}
      <div className="flex items-center gap-[5px]">
        <button type="button" aria-label="缩小" className="flex size-[25px] items-center justify-center">
          <svg width="10" height="10" viewBox="0 0 10 10"><path d="M0 4h10v2H0z" fill="#a5a5a5" /></svg>
        </button>
        <input
          type="range"
          aria-label="缩放比例"
          defaultValue={55}
          className="h-5 w-[75px] appearance-none bg-transparent [&::-webkit-slider-runnable-track]:h-px [&::-webkit-slider-runnable-track]:bg-[#a5a5a5] [&::-webkit-slider-thumb]:-mt-[10px] [&::-webkit-slider-thumb]:h-5 [&::-webkit-slider-thumb]:w-1.5 [&::-webkit-slider-thumb]:appearance-none [&::-webkit-slider-thumb]:border [&::-webkit-slider-thumb]:border-[#a0a0a0] [&::-webkit-slider-thumb]:bg-[#e6e6e6]"
        />
        <button type="button" aria-label="放大" className="flex size-[25px] items-center justify-center">
          <svg width="10" height="10" viewBox="0 0 10 10"><path d="M0 4h10v2H0zM4 0h2v10H4z" fill="#a5a5a5" /></svg>
        </button>
      </div>
    </div>
    <output className="w-[447px] pb-2 text-[15px] leading-5 text-[#3c3e40]">5652.09 , 2249.57 , 0.00</output>
    <div className="flex items-center gap-2 pb-px pr-[11px]">
      <StatusButton label="工作平面">
        <path d="M5 3h14l-4 9H1.500Z" fill={PALE} stroke="none" />
        <path d="M9 11.500H1.500L5 3h14l-2 5" />
        <circle cx="13.500" cy="14.500" r="3.200" stroke={TEAL} strokeWidth="1.800" />
        <path d="M8 14.500h2M17 14.500h2M13.500 18v1.500" stroke={TEAL} />
      </StatusButton>
      <div className="flex items-center">
        <StatusButton label="对象捕捉" active>
          <path d="M4.500 4.500h15v15h-15z" stroke={NAVY} />
          <path d="M.5.500h6v6h-6z" fill="#fff" stroke={TEAL} />
        </StatusButton>
        <button type="button" aria-label="捕捉设置" className="w-[10px]">
          <svg width="8" height="6" viewBox="0 0 8 6" fill="none" stroke="#555" className="mx-auto"><path d="M.5 5.500 4 1l3.500 4.500" /></svg>
        </button>
      </div>
      <StatusButton label="三维捕捉" active>
        <path d="M0 19.200h20" stroke={NAVY} />
        <path d="m1 18.500 8-7" strokeWidth="1.800" />
        <path d="m12.500 8 7-8" strokeDasharray="4 1" />
        <circle cx="10.500" cy="10.300" r="2.400" fill={PALE} />
      </StatusButton>
      <StatusButton label="极轴追踪" active>
        <path d="m1 0 6 14 3 5" />
        <path d="M7 12.500c4 0 6.500 3 6.500 6.500H10Z" fill="#f2fbfb" />
        <path d="M9 19.300h11" strokeDasharray="4 1.500" />
      </StatusButton>
      <StatusButton label="正交">
        <path d="M1 0v19.300h19" stroke={NAVY} />
        <path d="M1.500 12H8.500v7" stroke={TEAL} fill="#fff" strokeWidth="1.800" />
      </StatusButton>
      <StatusButton label="栅格">
        <path d="M.500.500h19v19H.500zM5.500.500v19M10 .500v19M14.500.500v19M.500 5.500h19M.500 10h19M.500 14.500h19" stroke={NAVY} strokeWidth="1.200" />
      </StatusButton>
      <StatusButton label="视点">
        <path d="m5 5 5-4.500 5 4.500" stroke="#9db4c4" strokeWidth="1.800" />
        <path d="M5 8c3-3 7-3 10 0" stroke="#7c9db3" />
        <path d="M0 7.500h5.500L1.500 13ZM20 7.500h-5.500l4 5.500ZM6.500 15h7L10 20Z" fill={NAVY} stroke="none" />
        <path d="M3 11.500c2 2.500 4 3.500 7 3.500s5-1 7-3.500" strokeDasharray="2 1" />
        <circle cx="10" cy="8.500" r="2" stroke={NAVY} fill="#fff" />
      </StatusButton>
      <StatusButton label="设置">
        <path d="m8.300 1h3.400l.8 2.600 1.800.8 2.700-1 1.900 3.300-1.700 2v2.600l1.700 2-1.900 3.300-2.700-1-1.800.8-.8 2.600H8.300l-.8-2.600-1.800-.8-2.700 1-1.900-3.300 1.700-2V8.700l-1.700-2L3 3.400l2.700 1 1.800-.8Z" fill="#8ecdd4" stroke="#33788f" />
        <circle cx="10" cy="10" r="3" fill="#f0f0f0" stroke="#33788f" />
      </StatusButton>
    </div>
  </footer>
);

const App = () => (
  <div className="flex h-screen flex-col overflow-hidden bg-[#eeeeee] font-[family-name:'Noto_Sans','Noto_Sans_CJK_SC',sans-serif]">
    <svg width="0" height="0" className="absolute" aria-hidden="true">
      <defs>
        <linearGradient id="metal">
          <stop offset="0" stopColor="#a9c5ca" />
          <stop offset=".55" stopColor="#e2f8fb" />
          <stop offset="1" stopColor="#a9c8ce" />
        </linearGradient>
        <radialGradient id="ball" cx=".6" cy=".4" r=".65">
          <stop offset="0" stopColor="#dcf7fa" />
          <stop offset="1" stopColor="#a2c2c8" />
        </radialGradient>
      </defs>
    </svg>
    <TitleBar />
    <MenuBar />
    <Ribbon />
    <div className="flex min-h-0 flex-1">
      <PropertyPanel />
      <Workspace />
    </div>
    <StatusBar />
  </div>
);

export default App;
